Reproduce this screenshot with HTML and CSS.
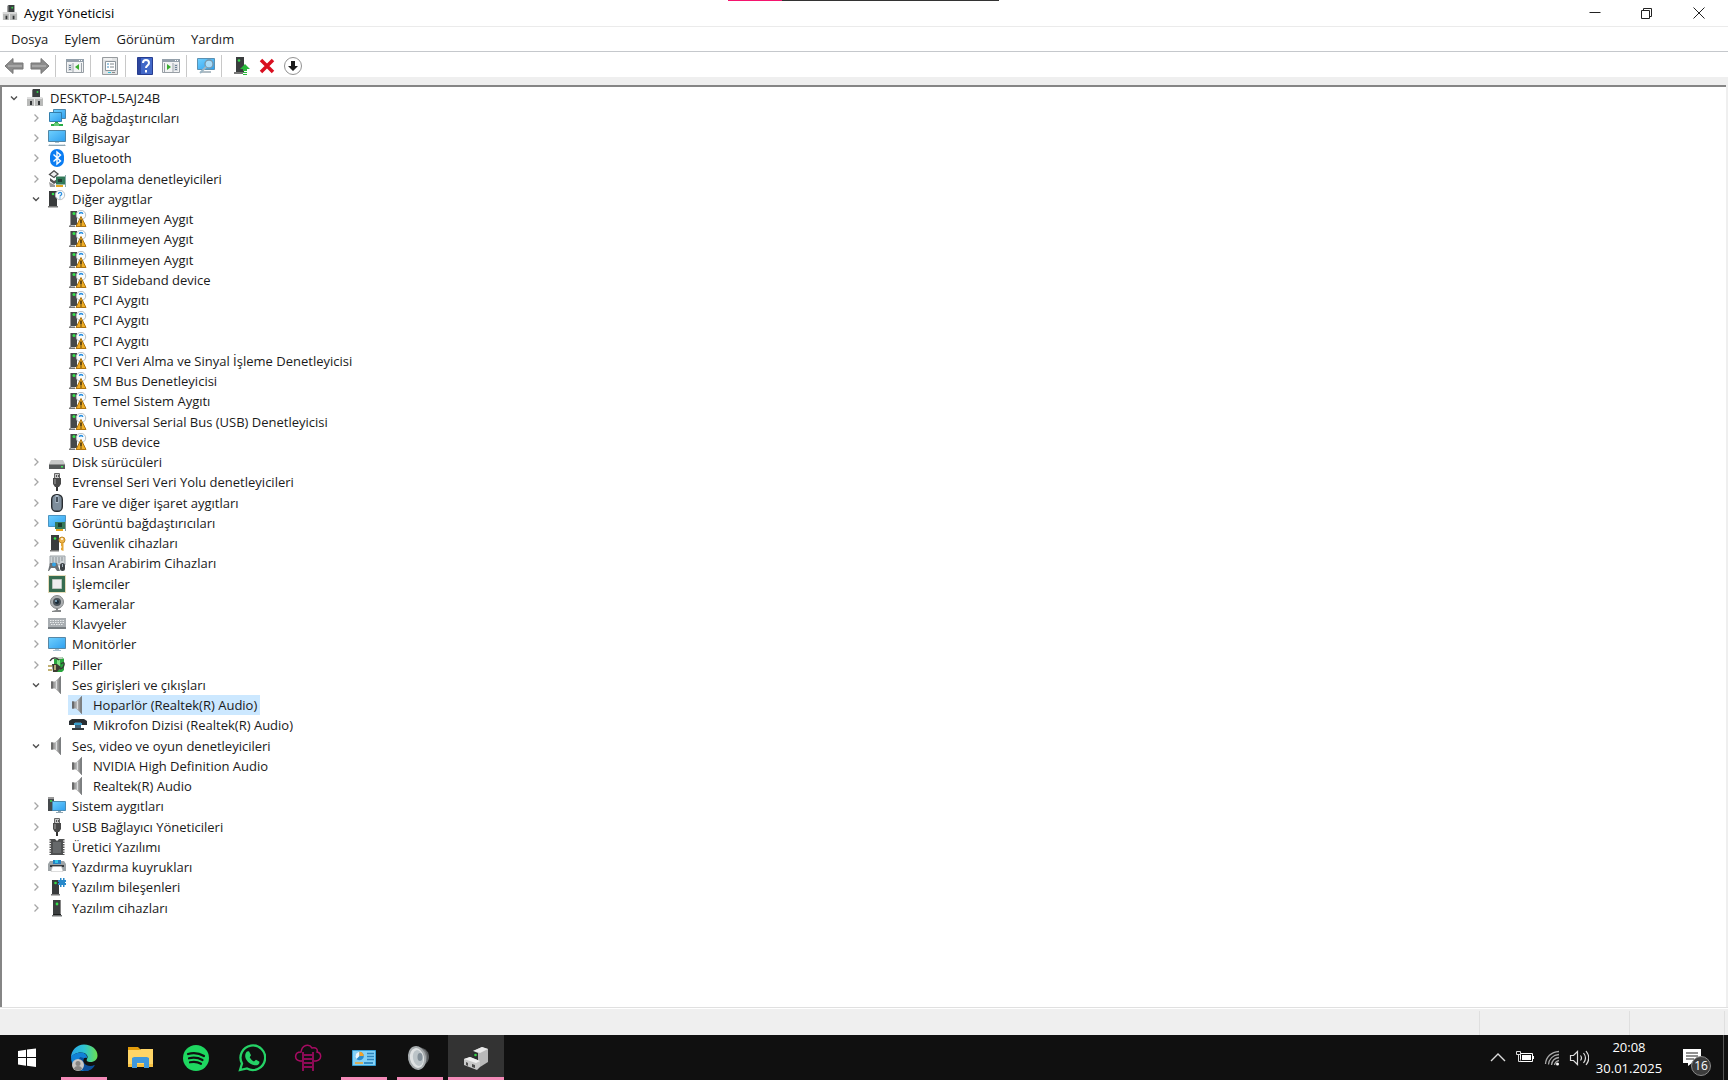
FILE: index.html
```html
<!DOCTYPE html>
<html lang="tr">

<head>
    <meta charset="UTF-8">
    <meta name="viewport" content="width=device-width, initial-scale=1.0">
    <title>Aygıt Yöneticisi</title>
    <link rel="stylesheet" href="styles.css">
</head>

<body>
    <!-- Icon definitions -->
    <svg class="defs" width="0" height="0" aria-hidden="true">
        <defs>
            <linearGradient id="g-blue" x1="0" y1="0" x2="1" y2="1">
                <stop offset="0" stop-color="#6fd0ff" />
                <stop offset="1" stop-color="#2f9fee" />
            </linearGradient>
            <linearGradient id="g-grey" x1="0" y1="0" x2="1" y2="0">
                <stop offset="0" stop-color="#6d6d6d" />
                <stop offset=".5" stop-color="#bdbdbd" />
                <stop offset="1" stop-color="#6d6d6d" />
            </linearGradient>
            <linearGradient id="g-edge" x1="0" y1="0" x2="1" y2="0">
                <stop offset="0" stop-color="#2aa5e8" />
                <stop offset=".5" stop-color="#2fc4d2" />
                <stop offset="1" stop-color="#6be04e" />
            </linearGradient>
        </defs>
        <symbol id="chev-right" viewBox="0 0 14 14"><path d="M5.500 3.500L9 7l-3.500 3.500" fill="none" stroke="#a6a6a6" stroke-width="1.300" /></symbol>
        <symbol id="chev-down" viewBox="0 0 14 14"><path d="M4 5.500L7 8.500l3-3" fill="none" stroke="#505050" stroke-width="1.400" /></symbol>
        <symbol id="computer" viewBox="0 0 18 18">
            <path d="M7 0h7v9H7z" fill="#3a3e3f" /><path d="M6 1l1-1v9H6z" fill="#777" /><circle cx="11.500" cy="3" r="1" fill="#35d44a" />
            <path d="M1 8h15l1 2v7H1z" fill="#b9bab9" /><path d="M1 8h15v2H1z" fill="#dedede" />
            <path d="M4 12h2v4H4zM12 12h2v4h-2z" fill="#343638" /><path d="M8 10h1v7H8z" fill="#eee" />
        </symbol>
        <symbol id="network" viewBox="0 0 18 18">
            <path d="M5.500 .5h12v9h-12z" fill="url(#g-blue)" stroke="#4a87ab" /><path d="M1.500 3.500h12v9h-12z" fill="url(#g-blue)" stroke="#327eac" />
            <path d="M7 13h3v2h5v2H3v-2h4z" fill="#27ad45" /><path d="M6 14h5v3H6z" fill="#65c976" />
        </symbol>
        <symbol id="pc" viewBox="0 0 18 18">
            <path d="M.5 1.500h17v11H.5z" fill="url(#g-blue)" stroke="#5186a5" /><path d="M7 13h4v1H7z" fill="#aac4d2" /><path d="M2 15h14l2 2H0z" fill="#8ea5b3" /><path d="M2 15h14v1H2z" fill="#d7e4ec" />
        </symbol>
        <symbol id="bluetooth" viewBox="0 0 18 18">
            <rect x="2" y="0" width="14" height="18" rx="7" fill="#0a7cf2" /><path d="M5.500 5.500l7 6.500L9 15V3l3.500 3-7 6.500" fill="none" stroke="#fff" stroke-width="1.400" />
        </symbol>
        <symbol id="storage" viewBox="0 0 18 18">
            <path d="M1.500 4.500L6 .8l4 3.200-4 3.500z" fill="#eee" stroke="#4c4c4c" stroke-width="1.300" /><path d="M2 8l4 3 5-3v3l-5 3-4-3z" fill="#555" /><path d="M1 12l6 3v2H2z" fill="#999" />
            <path d="M8 6.500h9v8H8z" fill="#317958" /><path d="M10 9h4v3h-4z" fill="#203f35" /><path d="M17 5h1v12h-1z" fill="#8aa" /><path d="M8 15h7v2H8z" fill="#e4a51e" />
        </symbol>
        <symbol id="tower" viewBox="0 0 18 18">
            <path d="M5 1h8v16H5z" fill="#3b3e3f" /><path d="M12 1h1v15h-1z" fill="#858585" /><path d="M5 15h8v1H5z" fill="#1d1f20" /><path d="M4 16h10v1.500H4z" fill="#707374" /><circle cx="9" cy="5" r="1.400" fill="#34e04a" />
        </symbol>
        <symbol id="unknown" viewBox="0 0 18 18">
            <path d="M1 1h8v15H1z" fill="#393b3c" /><path d="M0 16h10v1.500H0z" fill="#777" /><circle cx="5" cy="4" r="1.300" fill="#34e04a" />
            <circle cx="12" cy="5" r="4.700" fill="#f8fbfd" stroke="#bbc1c4" /><path d="M10.500 4c0-2.200 3.200-2 3.200 0 0 1.300-1.700 1.200-1.700 2.600M12 7.500v1" fill="none" stroke="#298fe0" stroke-width="1.200" />
        </symbol>
        <symbol id="warning" viewBox="0 0 18 18">
            <path d="M2 1h6v14H2z" fill="#46494a" /><path d="M1 1h1v15H1z" fill="#999" /><path d="M0 15.500h6V17H0z" fill="#777" /><circle cx="5" cy="3.500" r="1.500" fill="#34e04a" />
            <circle cx="12" cy="5" r="4.700" fill="#f8fbfd" stroke="#b7bec2" /><path d="M10.500 4c0-2 3-2 3.200 0" fill="none" stroke="#298fe0" stroke-width="1.500" />
            <path d="M12 6.500l5 10H7z" fill="#f0ae25" stroke="#ad7412" stroke-linejoin="round" /><path d="M12 9.500v4M12 14.500v1" stroke="#20190c" stroke-width="1.300" />
        </symbol>
        <symbol id="disk" viewBox="0 0 18 18">
            <path d="M3 7h12l2 4H1z" fill="#c7c8c8" /><path d="M1 11h16v5H1z" fill="#555859" /><path d="M1 11h16v1H1z" fill="#8c8e8e" /><path d="M13 13h2v1.500h-2z" fill="#43e45b" />
        </symbol>
        <symbol id="usb" viewBox="0 0 18 18">
            <path d="M6.500 .5h5v5h-5z" fill="#c7c7c7" stroke="#676767" /><path d="M8 2h1v2H8zM10 2h1v2h-1z" fill="#555" /><path d="M5 5h8v6l-2 3H7l-2-3z" fill="#494949" /><path d="M6 6h2v5H6z" fill="#777" /><path d="M8 14h2v4H8z" fill="#333" />
        </symbol>
        <symbol id="mouse" viewBox="0 0 18 18">
            <rect x="3.700" y=".7" width="10.600" height="16.600" rx="4.500" fill="#7e8e9c" stroke="#292d31" stroke-width="1.400" /><path d="M9 1v8" stroke="#aebdca" stroke-width="3" /><path d="M9 3v5" stroke="#222d36" stroke-width="1.500" />
        </symbol>
        <symbol id="display" viewBox="0 0 18 18">
            <path d="M.5 1.500h17v11H.5z" fill="url(#g-blue)" stroke="#4b94c1" /><path d="M7 8h10v7H7z" fill="#35795a" /><path d="M10 9h4v4h-4z" fill="#193d31" /><path d="M8 15h7v2H8z" fill="#e6a51b" /><path d="M17 7h1v10h-1z" fill="#83999a" />
        </symbol>
        <symbol id="security" viewBox="0 0 18 18">
            <path d="M3 1h8v15H3z" fill="#393b3c" /><path d="M2 16h9v1.500H2z" fill="#777" /><circle cx="7" cy="4.500" r="1.300" fill="#34e04a" />
            <circle cx="14" cy="6" r="3" fill="#edb54b" stroke="#bf882a" /><circle cx="14" cy="5" r="1" fill="#fff" /><path d="M13 8.500h2.500V17L13 16v-2l1-1-1-1z" fill="#e4a533" />
        </symbol>
        <symbol id="hid" viewBox="0 0 18 18">
            <path d="M2 2h15v9H2z" fill="#cfd4d7" stroke="#9ca2a7" /><path d="M4 4h11M4 6h11M4 8h8" stroke="#8a9196" stroke-dasharray="2 1" />
            <path d="M2 9h7l3 8H9l-2-3H3l-2 3H0z" fill="#6b7075" /><circle cx="6" cy="10.500" r="2" fill="#32a4e8" /><rect x="12" y="9" width="5" height="8" rx="2.500" fill="#3e4347" /><path d="M14.500 10v3" stroke="#a9b6c0" />
        </symbol>
        <symbol id="cpu" viewBox="0 0 18 18">
            <path d="M.5 .5h17v17H.5z" fill="none" stroke="#cfb874" stroke-dasharray="1 1" /><path d="M1 1h16v16H1z" fill="#376c50" /><path d="M4.500 4.500h9v9h-9z" fill="#eee" stroke="#bac5be" />
        </symbol>
        <symbol id="camera" viewBox="0 0 18 18">
            <circle cx="9" cy="7" r="6.500" fill="#adb0b2" stroke="#858889" /><circle cx="9" cy="7" r="4" fill="#4b5359" /><circle cx="9" cy="7" r="2" fill="#192b39" /><circle cx="8" cy="6" r="1" fill="#91b9d2" /><path d="M8 13h2v2h3v2H4v-1l4-1z" fill="#858889" />
        </symbol>
        <symbol id="keyboard" viewBox="0 0 18 18">
            <path d="M0 3h18v11H0z" fill="#a8adb1" /><path d="M0 12h18v2H0z" fill="#777d81" /><path d="M2 5.500h14M2 7.500h14M3 9.500h12" stroke="#e8ebec" stroke-dasharray="1.500 1" />
        </symbol>
        <symbol id="monitor" viewBox="0 0 18 18">
            <path d="M.5 2.500h17v11H.5z" fill="url(#g-blue)" stroke="#5787a5" /><path d="M7 14h4v1h2v1H5v-1h2z" fill="#a9c2d1" />
        </symbol>
        <symbol id="battery" viewBox="0 0 18 18">
            <path d="M7 1h7l2 2v11l-2 2H8l-2-2V3z" fill="#29a43d" /><path d="M7 1h7l1 2H6z" fill="#c0cdbf" /><path d="M9 4h3v10H9z" fill="#7ee183" />
            <path d="M13 8c5-5 4 5-2 5M2 5c3-5 7-3 9-1" fill="none" stroke="#383838" stroke-width="1.300" /><path d="M4 8h5l4 3-4 5H5z" fill="#3d3c33" /><path d="M0 10h4M0 14h4" stroke="#ad9845" stroke-width="1.500" /><path d="M6 9h2v5H6z" fill="#b4aa77" />
        </symbol>
        <symbol id="speaker" viewBox="0 0 18 18">
            <path d="M3 5.500h4l6-5.500v18l-6-5.500H3z" fill="url(#g-grey)" /><path d="M3 5.500h2v7H3z" fill="#6a6a6a" /><path d="M11.500 1.300L13 0v18l-1.500-1.300z" fill="#7b7e80" /><path d="M8.500 5v8" stroke="#dcdedf" />
        </symbol>
        <symbol id="microphone" viewBox="0 0 18 18">
            <path d="M0 5l3-2h12l3 2v4h-5l-1-2H6L5 9H0z" fill="#292e32" /><path d="M6 6h6v6H6z" fill="#43637a" /><path d="M5 7h8v2H5z" fill="#399ecc" /><path d="M3 12h12v2H3z" fill="#353a3e" />
        </symbol>
        <symbol id="system" viewBox="0 0 18 18">
            <path d="M0 0h6v14H0z" fill="#45494c" /><path d="M0 0h6v2H0z" fill="#999" /><circle cx="3" cy="4" r="1" fill="#38db4c" /><path d="M4.500 4.500h13v9h-13z" fill="url(#g-blue)" stroke="#4b8cb4" /><path d="M10 14h3v1h2v1H8v-1h2z" fill="#91a7b3" />
        </symbol>
        <symbol id="firmware" viewBox="0 0 18 18">
            <path d="M2.500 1v16M15.500 1v16" stroke="#555" stroke-width="2" stroke-dasharray="1.500 1" /><path d="M4 1h3l2 2 2-2h4v16H3V1z" fill="#4e5051" /><path d="M5 4h8v11H5z" fill="#66696b" />
        </symbol>
        <symbol id="printer" viewBox="0 0 18 18">
            <path d="M2 3h14l2 3v7H0V6z" fill="#9da3a6" /><path d="M5 2h8v4H5z" fill="#277fbf" /><path d="M7 2h3v3H7z" fill="#32c6e7" /><path d="M2 7h14v2H2z" fill="#373b3e" /><path d="M4.500 8.500h9l1.500 5H3z" fill="#fff" stroke="#bbb" stroke-width=".5" />
        </symbol>
        <symbol id="component" viewBox="0 0 18 18">
            <path d="M4 2h7v14H4z" fill="#393b3c" /><path d="M3 16h9v1.500H3z" fill="#777" /><circle cx="7.500" cy="5" r="1.300" fill="#34e04a" /><path d="M10 2h2V0h1.500v2H15V0h1.500v2H18v2h-1v1h1v2h-1.500v2H15V7h-1.500v2H12V7h-2V5h1V4h-1z" fill="#2789cb" />
        </symbol>
        <symbol id="console" viewBox="0 0 20 20">
            <path d="M1.500 3.500h17v13h-17z" fill="#f2f3f4" stroke="#989fa5" /><path d="M1 3h18v3H1z" fill="#94a0ab" /><path d="M14 4h1v1h-1zM16 4h1v1h-1z" fill="#fff" />
        </symbol>
    </svg>

    <div class="window">
        <div class="progress"><span></span></div>

        <header class="titlebar">
            <svg class="title-icon"><use href="#computer" /></svg>
            <h1>Aygıt Yöneticisi</h1>
            <div class="window-buttons">
                <button type="button" aria-label="Simge durumuna küçült"><svg viewBox="0 0 12 12"><path d="M.5 5.500h11" /></svg></button>
                <button type="button" aria-label="Önceki boyut"><svg viewBox="0 0 12 12"><path d="M.5 3.500h8v8h-8zM2.500 3V1.500h8v8H9" /></svg></button>
                <button type="button" aria-label="Kapat"><svg viewBox="0 0 12 12"><path d="M.5 .5l11 11M11.500 .5l-11 11" /></svg></button>
            </div>
        </header>

        <nav class="menubar">
            <button type="button">Dosya</button>
            <button type="button">Eylem</button>
            <button type="button">Görünüm</button>
            <button type="button">Yardım</button>
        </nav>

        <div class="toolbar">
            <button type="button" aria-label="Geri"><svg viewBox="0 0 20 20"><path d="M1 10l8-7.500V7h10v6H9v4.500z" fill="#8c8c8c" stroke="#777" /><path d="M4 10h14" stroke="#a6a6a6" stroke-width="2" /></svg></button>
            <button type="button" aria-label="İleri"><svg viewBox="0 0 20 20"><path d="M19 10l-8-7.500V7H1v6h10v4.500z" fill="#8c8c8c" stroke="#777" /><path d="M2 10h14" stroke="#a6a6a6" stroke-width="2" /></svg></button>
            <span class="separator"></span>
            <button type="button" aria-label="Konsol ağacını göster"><svg viewBox="0 0 20 20"><use href="#console" /><path d="M3 8h4v7H3z" fill="#d6dade" /><path d="M4 9.500h2M4 11.500h2M4 13.500h2" stroke="#6d8298" /><path d="M8 7v9M16.500 7v9" stroke="#9aa2a9" /><path d="M14 8v6l-4-3z" fill="#39ad2e" /></svg></button>
            <span class="separator"></span>
            <button type="button" aria-label="Özellikler"><svg viewBox="0 0 20 20"><path d="M2.500 1.500h15v17h-15z" fill="#e1e3e4" stroke="#979b9e" /><path d="M5.500 5.500h10v9h-10z" fill="#fff" stroke="#8c959b" /><path d="M4 3h8" stroke="#fff" /><path d="M7 8h2M7 11h2" stroke="#3e8ec0" /><path d="M10 8h4M10 11h4" stroke="#7f878c" /><path d="M8 16h3v1H8z" fill="#30c6de" /><path d="M12 16h3v1h-3z" fill="#888" /></svg></button>
            <span class="separator"></span>
            <button type="button" aria-label="Yardım"><svg viewBox="0 0 20 20"><path d="M2.500 1.500h15v17h-15z" fill="#4268c8" stroke="#273d8f" /><path d="M3 2h3v16H3z" fill="#2c469f" /><path d="M8 7c0-4 6-4 6 0 0 2.500-3 2.500-3 5M11 14v2.500" fill="none" stroke="#fff" stroke-width="2" /></svg></button>
            <button type="button" aria-label="Eylem bölmesi"><svg viewBox="0 0 20 20"><use href="#console" /><path d="M13 8h4v7h-4z" fill="#d6dade" /><path d="M14 9.500h2M14 11.500h2M14 13.500h2" stroke="#6d8298" /><path d="M3.500 7v9M12 7v9" stroke="#9aa2a9" /><path d="M6 8v6l4-3z" fill="#39ad2e" /></svg></button>
            <span class="separator"></span>
            <button type="button" aria-label="Donanım değişikliklerini tara"><svg viewBox="0 0 20 20"><path d="M1.500 2.500h17v11h-17z" fill="url(#g-blue)" stroke="#5b91b2" /><path d="M5 15h10v2H5z" fill="#b1bdc5" /><circle cx="13" cy="8" r="4" fill="#c0e6fa" fill-opacity=".8" stroke="#7596aa" stroke-width="1.300" /><path d="M10 11l-6 6" stroke="#9db6c5" stroke-width="2" /></svg></button>
            <span class="separator"></span>
            <button type="button" aria-label="Sürücüyü güncelleştir"><svg viewBox="0 0 20 20"><path d="M5 1h8v16H5z" fill="#3a3d3e" /><path d="M3 16h9v2H3z" fill="#777" /><circle cx="8" cy="4.500" r="1.300" fill="#34e04a" /><path d="M14 8l5 5h-3v2h-4v-2H9zM12 16h4v1h-4zM12 18h4v1h-4z" fill="#28b83a" /></svg></button>
            <button type="button" aria-label="Aygıtı kaldır"><svg viewBox="0 0 20 20"><path d="M4 4l12 12M16 4L4 16" stroke="#d90f20" stroke-width="3.500" /></svg></button>
            <button type="button" aria-label="Aygıtı devre dışı bırak"><svg viewBox="0 0 20 20"><circle cx="10" cy="10" r="8.500" fill="#fff" stroke="#929292" /><path d="M8 5h4v5h3l-5 5-5-5h3z" fill="#1b1b1b" /></svg></button>
        </div>

        <main class="pane">
            <ul class="tree" role="tree" aria-label="Aygıtlar">
                <li class="row level-0" role="treeitem" aria-level="1"><button type="button" aria-label="Daralt"><svg><use href="#chev-down" /></svg></button><span class="node"><svg><use href="#computer" /></svg>DESKTOP-L5AJ24B</span></li>
                <li class="row level-1" role="treeitem" aria-level="2"><button type="button" aria-label="Genişlet"><svg><use href="#chev-right" /></svg></button><span class="node"><svg><use href="#network" /></svg>Ağ bağdaştırıcıları</span></li>
                <li class="row level-1" role="treeitem" aria-level="2"><button type="button" aria-label="Genişlet"><svg><use href="#chev-right" /></svg></button><span class="node"><svg><use href="#pc" /></svg>Bilgisayar</span></li>
                <li class="row level-1" role="treeitem" aria-level="2"><button type="button" aria-label="Genişlet"><svg><use href="#chev-right" /></svg></button><span class="node"><svg><use href="#bluetooth" /></svg>Bluetooth</span></li>
                <li class="row level-1" role="treeitem" aria-level="2"><button type="button" aria-label="Genişlet"><svg><use href="#chev-right" /></svg></button><span class="node"><svg><use href="#storage" /></svg>Depolama denetleyicileri</span></li>
                <li class="row level-1" role="treeitem" aria-level="2"><button type="button" aria-label="Daralt"><svg><use href="#chev-down" /></svg></button><span class="node"><svg><use href="#unknown" /></svg>Diğer aygıtlar</span></li>
                <li class="row level-2" role="treeitem" aria-level="3"><span class="node"><svg><use href="#warning" /></svg>Bilinmeyen Aygıt</span></li>
                <li class="row level-2" role="treeitem" aria-level="3"><span class="node"><svg><use href="#warning" /></svg>Bilinmeyen Aygıt</span></li>
                <li class="row level-2" role="treeitem" aria-level="3"><span class="node"><svg><use href="#warning" /></svg>Bilinmeyen Aygıt</span></li>
                <li class="row level-2" role="treeitem" aria-level="3"><span class="node"><svg><use href="#warning" /></svg>BT Sideband device</span></li>
                <li class="row level-2" role="treeitem" aria-level="3"><span class="node"><svg><use href="#warning" /></svg>PCI Aygıtı</span></li>
                <li class="row level-2" role="treeitem" aria-level="3"><span class="node"><svg><use href="#warning" /></svg>PCI Aygıtı</span></li>
                <li class="row level-2" role="treeitem" aria-level="3"><span class="node"><svg><use href="#warning" /></svg>PCI Aygıtı</span></li>
                <li class="row level-2" role="treeitem" aria-level="3"><span class="node"><svg><use href="#warning" /></svg>PCI Veri Alma ve Sinyal İşleme Denetleyicisi</span></li>
                <li class="row level-2" role="treeitem" aria-level="3"><span class="node"><svg><use href="#warning" /></svg>SM Bus Denetleyicisi</span></li>
                <li class="row level-2" role="treeitem" aria-level="3"><span class="node"><svg><use href="#warning" /></svg>Temel Sistem Aygıtı</span></li>
                <li class="row level-2" role="treeitem" aria-level="3"><span class="node"><svg><use href="#warning" /></svg>Universal Serial Bus (USB) Denetleyicisi</span></li>
                <li class="row level-2" role="treeitem" aria-level="3"><span class="node"><svg><use href="#warning" /></svg>USB device</span></li>
                <li class="row level-1" role="treeitem" aria-level="2"><button type="button" aria-label="Genişlet"><svg><use href="#chev-right" /></svg></button><span class="node"><svg><use href="#disk" /></svg>Disk sürücüleri</span></li>
                <li class="row level-1" role="treeitem" aria-level="2"><button type="button" aria-label="Genişlet"><svg><use href="#chev-right" /></svg></button><span class="node"><svg><use href="#usb" /></svg>Evrensel Seri Veri Yolu denetleyicileri</span></li>
                <li class="row level-1" role="treeitem" aria-level="2"><button type="button" aria-label="Genişlet"><svg><use href="#chev-right" /></svg></button><span class="node"><svg><use href="#mouse" /></svg>Fare ve diğer işaret aygıtları</span></li>
                <li class="row level-1" role="treeitem" aria-level="2"><button type="button" aria-label="Genişlet"><svg><use href="#chev-right" /></svg></button><span class="node"><svg><use href="#display" /></svg>Görüntü bağdaştırıcıları</span></li>
                <li class="row level-1" role="treeitem" aria-level="2"><button type="button" aria-label="Genişlet"><svg><use href="#chev-right" /></svg></button><span class="node"><svg><use href="#security" /></svg>Güvenlik cihazları</span></li>
                <li class="row level-1" role="treeitem" aria-level="2"><button type="button" aria-label="Genişlet"><svg><use href="#chev-right" /></svg></button><span class="node"><svg><use href="#hid" /></svg>İnsan Arabirim Cihazları</span></li>
                <li class="row level-1" role="treeitem" aria-level="2"><button type="button" aria-label="Genişlet"><svg><use href="#chev-right" /></svg></button><span class="node"><svg><use href="#cpu" /></svg>İşlemciler</span></li>
                <li class="row level-1" role="treeitem" aria-level="2"><button type="button" aria-label="Genişlet"><svg><use href="#chev-right" /></svg></button><span class="node"><svg><use href="#camera" /></svg>Kameralar</span></li>
                <li class="row level-1" role="treeitem" aria-level="2"><button type="button" aria-label="Genişlet"><svg><use href="#chev-right" /></svg></button><span class="node"><svg><use href="#keyboard" /></svg>Klavyeler</span></li>
                <li class="row level-1" role="treeitem" aria-level="2"><button type="button" aria-label="Genişlet"><svg><use href="#chev-right" /></svg></button><span class="node"><svg><use href="#monitor" /></svg>Monitörler</span></li>
                <li class="row level-1" role="treeitem" aria-level="2"><button type="button" aria-label="Genişlet"><svg><use href="#chev-right" /></svg></button><span class="node"><svg><use href="#battery" /></svg>Piller</span></li>
                <li class="row level-1" role="treeitem" aria-level="2"><button type="button" aria-label="Daralt"><svg><use href="#chev-down" /></svg></button><span class="node"><svg><use href="#speaker" /></svg>Ses girişleri ve çıkışları</span></li>
                <li class="row level-2" role="treeitem" aria-level="3" aria-selected="true"><span class="node selected"><svg><use href="#speaker" /></svg>Hoparlör (Realtek(R) Audio)</span></li>
                <li class="row level-2" role="treeitem" aria-level="3"><span class="node"><svg><use href="#microphone" /></svg>Mikrofon Dizisi (Realtek(R) Audio)</span></li>
                <li class="row level-1" role="treeitem" aria-level="2"><button type="button" aria-label="Daralt"><svg><use href="#chev-down" /></svg></button><span class="node"><svg><use href="#speaker" /></svg>Ses, video ve oyun denetleyicileri</span></li>
                <li class="row level-2" role="treeitem" aria-level="3"><span class="node"><svg><use href="#speaker" /></svg>NVIDIA High Definition Audio</span></li>
                <li class="row level-2" role="treeitem" aria-level="3"><span class="node"><svg><use href="#speaker" /></svg>Realtek(R) Audio</span></li>
                <li class="row level-1" role="treeitem" aria-level="2"><button type="button" aria-label="Genişlet"><svg><use href="#chev-right" /></svg></button><span class="node"><svg><use href="#system" /></svg>Sistem aygıtları</span></li>
                <li class="row level-1" role="treeitem" aria-level="2"><button type="button" aria-label="Genişlet"><svg><use href="#chev-right" /></svg></button><span class="node"><svg><use href="#usb" /></svg>USB Bağlayıcı Yöneticileri</span></li>
                <li class="row level-1" role="treeitem" aria-level="2"><button type="button" aria-label="Genişlet"><svg><use href="#chev-right" /></svg></button><span class="node"><svg><use href="#firmware" /></svg>Üretici Yazılımı</span></li>
                <li class="row level-1" role="treeitem" aria-level="2"><button type="button" aria-label="Genişlet"><svg><use href="#chev-right" /></svg></button><span class="node"><svg><use href="#printer" /></svg>Yazdırma kuyrukları</span></li>
                <li class="row level-1" role="treeitem" aria-level="2"><button type="button" aria-label="Genişlet"><svg><use href="#chev-right" /></svg></button><span class="node"><svg><use href="#component" /></svg>Yazılım bileşenleri</span></li>
                <li class="row level-1" role="treeitem" aria-level="2"><button type="button" aria-label="Genişlet"><svg><use href="#chev-right" /></svg></button><span class="node"><svg><use href="#tower" /></svg>Yazılım cihazları</span></li>
            </ul>
        </main>

        <footer class="statusbar">
            <span></span>
            <span></span>
            <span></span>
        </footer>
    </div>

    <div class="taskbar">
        <button type="button" class="task" aria-label="Başlat"><svg viewBox="0 0 28 28"><path d="M4 7l8-1.200v7.200H4zM13 5.600L22 4.500V13h-9zM4 14h8v7.700L4 20.500zM13 14h9v9l-9-1.200z" fill="#fff" /></svg></button>
        <button type="button" class="task running" aria-label="Microsoft Edge"><svg viewBox="0 0 28 28"><path d="M1 14C1 6 7 .5 14 .5c8 0 13.500 5 13.500 11 0 4-3 6.500-7 6.500-3 0-4.500-1.300-3.500-3 2-3-1-6.500-6-6.500-5 0-9 2.500-10 5.500z" fill="url(#g-edge)" /><path d="M1 13c2-3 6-4.500 10-4.500 4 0 6.500 2.500 6 5.500-2-1-4 0-4 3 0 4 5 7 11 4.500-3 4.500-7 6-11 5.500C6 26.500 1 21 1 13z" fill="#1182d7" /><path d="M10 13c-3 5-1 11 4 14 5 .5 9-2 11-6-4 2-9 1-11-2-1-2-1-4 0-5z" fill="#0b4f9b" /><circle cx="8" cy="21" r="6" fill="#c8c6c4" /><circle cx="8" cy="19.500" r="2.500" fill="#878583" /><path d="M4 25c0-4 8-4 8 0-2 2-6 2-8 0z" fill="#878583" /></svg></button>
        <button type="button" class="task" aria-label="Dosya Gezgini"><svg viewBox="0 0 28 28"><path d="M2 3h10l2 2v3H2z" fill="#e39c0b" /><path d="M2 6h11l2-1h12v18H2z" fill="#ffd566" /><path d="M2 20h25v3H2z" fill="#f5bf42" /><path d="M6 14l2-1h13l2 1v10h-5v-5h-7v5H6z" fill="#3f98dc" /></svg></button>
        <button type="button" class="task" aria-label="Spotify"><svg viewBox="0 0 28 28"><circle cx="14" cy="14" r="13" fill="#1ed760" /><path d="M6 10c5-1.500 11-1 16 2M7 14.300c5-1.300 9-.8 13.500 1.700M8 18.300c4-1 7.500-.6 11 1.500" fill="none" stroke="#101010" stroke-width="2.200" stroke-linecap="round" /></svg></button>
        <button type="button" class="task" aria-label="WhatsApp"><svg viewBox="0 0 28 28"><path d="M2 26l2-6.500A12.300 12.300 0 1 1 9 24.500z" fill="none" stroke="#25d366" stroke-width="2.300" /><path d="M9 7.500l2-.3 2 4-1.300 2c1 2 2.300 3.200 4.300 4.200l2-1.700 3.500 2c0 3-2.500 4-5 3.500-5-1-9-5-9.300-9-.1-2 .7-4 1.800-4.700z" fill="#25d366" /></svg></button>
        <button type="button" class="task" aria-label="Bulut"><svg viewBox="0 0 28 28"><path d="M8 17H6c-6-1-6-9 1-9C8 1 15-1 18 4c4-1 6 1 5 4 5 1 5 8-1 9h-2" fill="none" stroke="#a60b62" stroke-width="1.500" /><path d="M9 8v19M19 8v19M9 11h10M9 15h10M9 19h10M9 23h10" fill="none" stroke="#8c0a55" stroke-width="2" /></svg></button>
        <button type="button" class="task running" aria-label="Denetim Masası"><svg viewBox="0 0 28 28"><path d="M2.500 6.500h23v15h-23z" fill="#84d1f7" stroke="#369ed4" /><circle cx="9.500" cy="12" r="4.300" fill="#2b8ccd" /><path d="M9.500 12V7.700a4.300 4.300 0 0 0-3 7.300z" fill="#e9f7fd" /><path d="M9.500 12V7.700a4.300 4.300 0 0 1 4.300 4.300z" fill="#f2a32b" /><path d="M17 9.500h7M17 12.500h7M17 15.500h7" stroke="#2e86bf" stroke-width="1.500" /><path d="M5 19h8" stroke="#f0a32d" stroke-width="1.500" /><path d="M14 19h9" stroke="#1d75b0" stroke-width="1.500" /></svg></button>
        <button type="button" class="task running" aria-label="Ses"><svg viewBox="0 0 28 28"><path d="M12 3c9 1 11 6 11 10s-3 8-9 10z" fill="#55585a" /><path d="M13 4c7 1 8 5 8 9s-2 7-6 8z" fill="#7b7e80" /><ellipse cx="11" cy="14" rx="8" ry="11" transform="rotate(-12 11 14)" fill="#dfe2e3" stroke="#a6abad" stroke-width="2" /><ellipse cx="12" cy="14" rx="5" ry="8" transform="rotate(-12 12 14)" fill="#bcc4c8" /><ellipse cx="14" cy="13" rx="2.500" ry="4" fill="#849099" /></svg></button>
        <button type="button" class="task running active" aria-label="Aygıt Yöneticisi"><svg viewBox="0 0 28 28"><path d="M11 7l9-4 6 2v13l-8 5-7-3z" fill="#b8b8b8" /><path d="M11 7l9-4 6 2-8 4z" fill="#e8e8e8" /><path d="M11 7l5 2v12l-5-2z" fill="#2b2d2e" /><circle cx="13.500" cy="11" r="1.300" fill="#32d444" /><path d="M2 15l6-2 10 4v6l-3 3-13-5z" fill="#c9c9c9" /><path d="M2 15l6-2 10 4-4 2z" fill="#efefef" /><path d="M4 18l2 1v3l-2-1zM10 20l3 1v3l-3-1z" fill="#4c4c4c" /></svg></button>

        <div class="tray">
            <button type="button" aria-label="Gizli simgeleri göster"><svg viewBox="0 0 20 20"><path d="M3 13l7-7 7 7" fill="none" stroke="#ddd" stroke-width="1.400" /></svg></button>
            <button type="button" aria-label="Pil"><svg viewBox="0 0 20 20"><path d="M5.500 5.500h12v8h-12z" fill="none" stroke="#fff" /><path d="M7 7h9v5H7zM18 8h1v3h-1z" fill="#fff" /><path d="M1.500 3.500h4v3h-4zM3.500 7v6.500H6" fill="#101010" stroke="#ddd" /></svg></button>
            <button type="button" aria-label="Ağ"><svg viewBox="0 0 20 20"><path d="M3.500 16C4 9 9 4 17 3.500M6.500 16.500C7 11 11 7 17 6.500M9.500 17c.5-4 3-7 7.500-7.500M12.500 17c.5-2.500 2-4 4.500-4.500" fill="none" stroke="#aaa" stroke-width="1.300" /><circle cx="15.500" cy="16" r="1.500" fill="#fff" /></svg></button>
            <button type="button" aria-label="Ses düzeyi"><svg viewBox="0 0 20 20"><path d="M1.500 7.500h3l4-4v13l-4-4h-3zM11.500 7.500q2 2.500 0 5M14.500 5q4 5 0 10M17 3q5.500 7 0 14" fill="none" stroke="#ddd" stroke-width="1.200" /></svg></button>
            <button type="button" class="clock"><time datetime="2025-01-30T20:08">20:08<br>30.01.2025</time></button>
            <button type="button" class="notifications" aria-label="16 yeni bildirim"><svg viewBox="0 0 20 20"><path d="M1 1h18v14h-9l-4 3v-3H1z" fill="#fff" /><path d="M4 5h12M4 8h12M4 11h8" stroke="#222" stroke-width="1.200" /></svg><span class="badge">16</span></button>
            <button type="button" class="show-desktop" aria-label="Masaüstünü göster"></button>
        </div>
    </div>
</body>

</html>
```
FILE: styles.css
```css
* {
    box-sizing: border-box;
}

body {
    display: flex;
    flex-direction: column;
    min-height: 100vh;
    margin: 0;
    font-family: "Open Sans", "Noto Sans", sans-serif;
    font-size: 13px;
    line-height: 20px;
    color: #1a1a1a;
    background-color: #fff;
}

button {
    display: flex;
    align-items: center;
    justify-content: center;
    padding: 0;
    border: 0;
    background: none;
    font: inherit;
    color: inherit;
}

svg {
    display: block;
    flex: none;
}

.defs {
    position: absolute;
}

.window {
    flex: 1;
    display: flex;
    flex-direction: column;
    background-color: #efefef;
}

/* thin progress line over the top edge */
.progress {
    position: absolute;
    top: 0;
    left: 50%;
    width: 271px;
    height: 1px;
    margin-left: -136px;
    background-color: #333;
}

.progress span {
    display: block;
    width: 20%;
    height: 1px;
    background-color: #f5146e;
}

/* Title bar */
.titlebar {
    display: flex;
    align-items: center;
    height: 27px;
    padding: 0 3px 0 2px;
    border-bottom: 1px solid #ebebeb;
    background-color: #fff;
}

.title-icon {
    width: 16px;
    height: 16px;
    margin-right: 6px;
}

.titlebar h1 {
    margin: 0;
    font-size: 13px;
    font-weight: normal;
    color: #000;
}

.window-buttons {
    display: flex;
    margin-left: auto;
}

.window-buttons button {
    width: 52px;
    height: 26px;
}

.window-buttons svg {
    width: 12px;
    height: 12px;
    fill: none;
    stroke: #222;
}

/* Menu and toolbar */
.menubar {
    display: flex;
    height: 25px;
    padding-left: 3px;
    border-bottom: 1px solid #c5c8cc;
    background-color: #fff;
}

.menubar button {
    padding: 0 8px;
}

.toolbar {
    display: flex;
    align-items: center;
    height: 25px;
    margin-bottom: 8px;
    padding: 2px 1px 0;
    background-color: #fff;
}

.toolbar button {
    width: 26px;
    height: 22px;
}

.toolbar svg {
    width: 20px;
    height: 20px;
}

.separator {
    width: 1px;
    height: 22px;
    margin: 0 6px 0 2px;
    background-color: #c8c8c8;
}

/* Device tree */
.pane {
    flex: 1;
    margin-right: 2px;
    border-top: 2px solid #858585;
    border-left: 2px solid #858585;
    background-color: #fff;
}

.tree {
    margin: 0;
    padding: 0;
    list-style: none;
}

.row {
    display: flex;
    align-items: center;
    height: 20px;
}

.row:nth-child(4n + 1) {
    height: 21px;
}

.row button {
    width: 14px;
    height: 14px;
    margin-right: 4px;
}

.row button svg {
    width: 14px;
    height: 14px;
}

.level-0 {
    padding-left: 5px;
}

.level-1 {
    padding-left: 27px;
}

.level-2 {
    padding-left: 66px;
}

.node {
    display: flex;
    align-items: center;
    align-self: stretch;
    gap: 6px;
    padding: 0 3px 0 1px;
    white-space: nowrap;
}

.node svg {
    width: 18px;
    height: 18px;
}

.node.selected {
    background-color: #cce8ff;
}

/* Status bar */
.statusbar {
    display: flex;
    height: 28px;
    padding: 3px 3px 0 0;
    border-top: 1px solid #e0e0e0;
    box-shadow: inset 0 1px #fff;
}

.statusbar span {
    width: 150px;
    border-right: 1px solid #dfdfdf;
}

.statusbar span:first-child {
    flex: 1;
}

.statusbar span:last-child {
    width: 95px;
}

/* Taskbar */
.taskbar {
    display: flex;
    height: 45px;
    background-color: #101010;
    color: #fff;
}

.task {
    position: relative;
    width: 56px;
    height: 45px;
}

.task svg {
    width: 28px;
    height: 28px;
}

.running::after {
    content: "";
    position: absolute;
    right: 5px;
    bottom: 0;
    left: 5px;
    height: 3px;
    background-color: #f48ab8;
}

.active {
    background-color: #333;
}

.active::after {
    right: 0;
    left: 0;
}

.tray {
    display: flex;
    margin-left: auto;
}

.tray button {
    width: 27px;
}

.tray svg {
    width: 20px;
    height: 20px;
}

.tray .clock {
    width: 74px;
    line-height: 21px;
}

.tray .notifications {
    position: relative;
    width: 52px;
    margin-right: 5px;
}

.badge {
    position: absolute;
    top: 21px;
    left: 25px;
    width: 20px;
    height: 20px;
    border: 1px solid #888;
    border-radius: 50%;
    background-color: #3c3c3c;
    font-size: 12px;
    line-height: 18px;
}

.tray .show-desktop {
    width: 5px;
    border-left: 1px solid #555;
}
```
